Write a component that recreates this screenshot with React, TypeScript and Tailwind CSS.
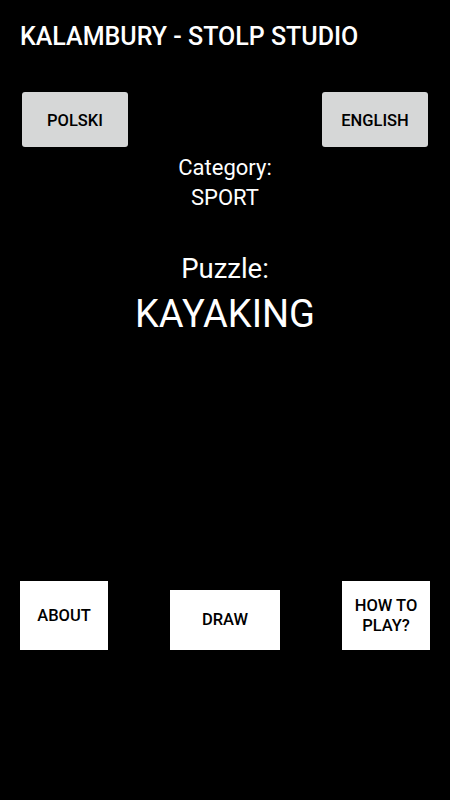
import React from "react";

export default function App() {
  return (
    <div className="w-[450px] h-[800px] bg-black text-white flex flex-col" style={{ fontFamily: "Roboto, 'Noto Sans', sans-serif" }}>
      <div className="pl-[20px] pt-[21px] h-[60px] text-[25px] leading-[32px] font-medium">KALAMBURY - STOLP STUDIO</div>
      <div className="flex justify-between px-[22px] pt-[32px]">
        <button className="w-[106px] h-[55px] pt-[3px] bg-[#d6d7d7] rounded-[3px] text-black text-[16.5px] font-medium">POLSKI</button>
        <button className="w-[106px] h-[55px] pt-[3px] bg-[#d6d7d7] rounded-[3px] text-black text-[16.5px] font-medium">ENGLISH</button>
      </div>
      <div className="flex flex-col items-center">
        <div className="text-[22px] leading-[30px] mt-[6px]">Category:</div>
        <div className="text-[22px] leading-[30px]">SPORT</div>
        <div className="text-[27.5px] leading-[32px] mt-[40px]">Puzzle:</div>
        <div className="text-[38px] leading-[46px] mt-[6px]">KAYAKING</div>
      </div>
      <div className="flex justify-between items-end pl-[20px] pr-[20px] mt-[244px]">
        <button className="w-[88px] h-[69px] bg-white text-black text-[16.5px] font-medium leading-[20px]">ABOUT</button>
        <button className="w-[110px] h-[60px] bg-white text-black text-[16.5px] font-medium leading-[20px]">DRAW</button>
        <button className="w-[88px] h-[69px] bg-white text-black text-[16.5px] font-medium leading-[20px]">HOW TO<br />PLAY?</button>
      </div>
    </div>
  );
}
